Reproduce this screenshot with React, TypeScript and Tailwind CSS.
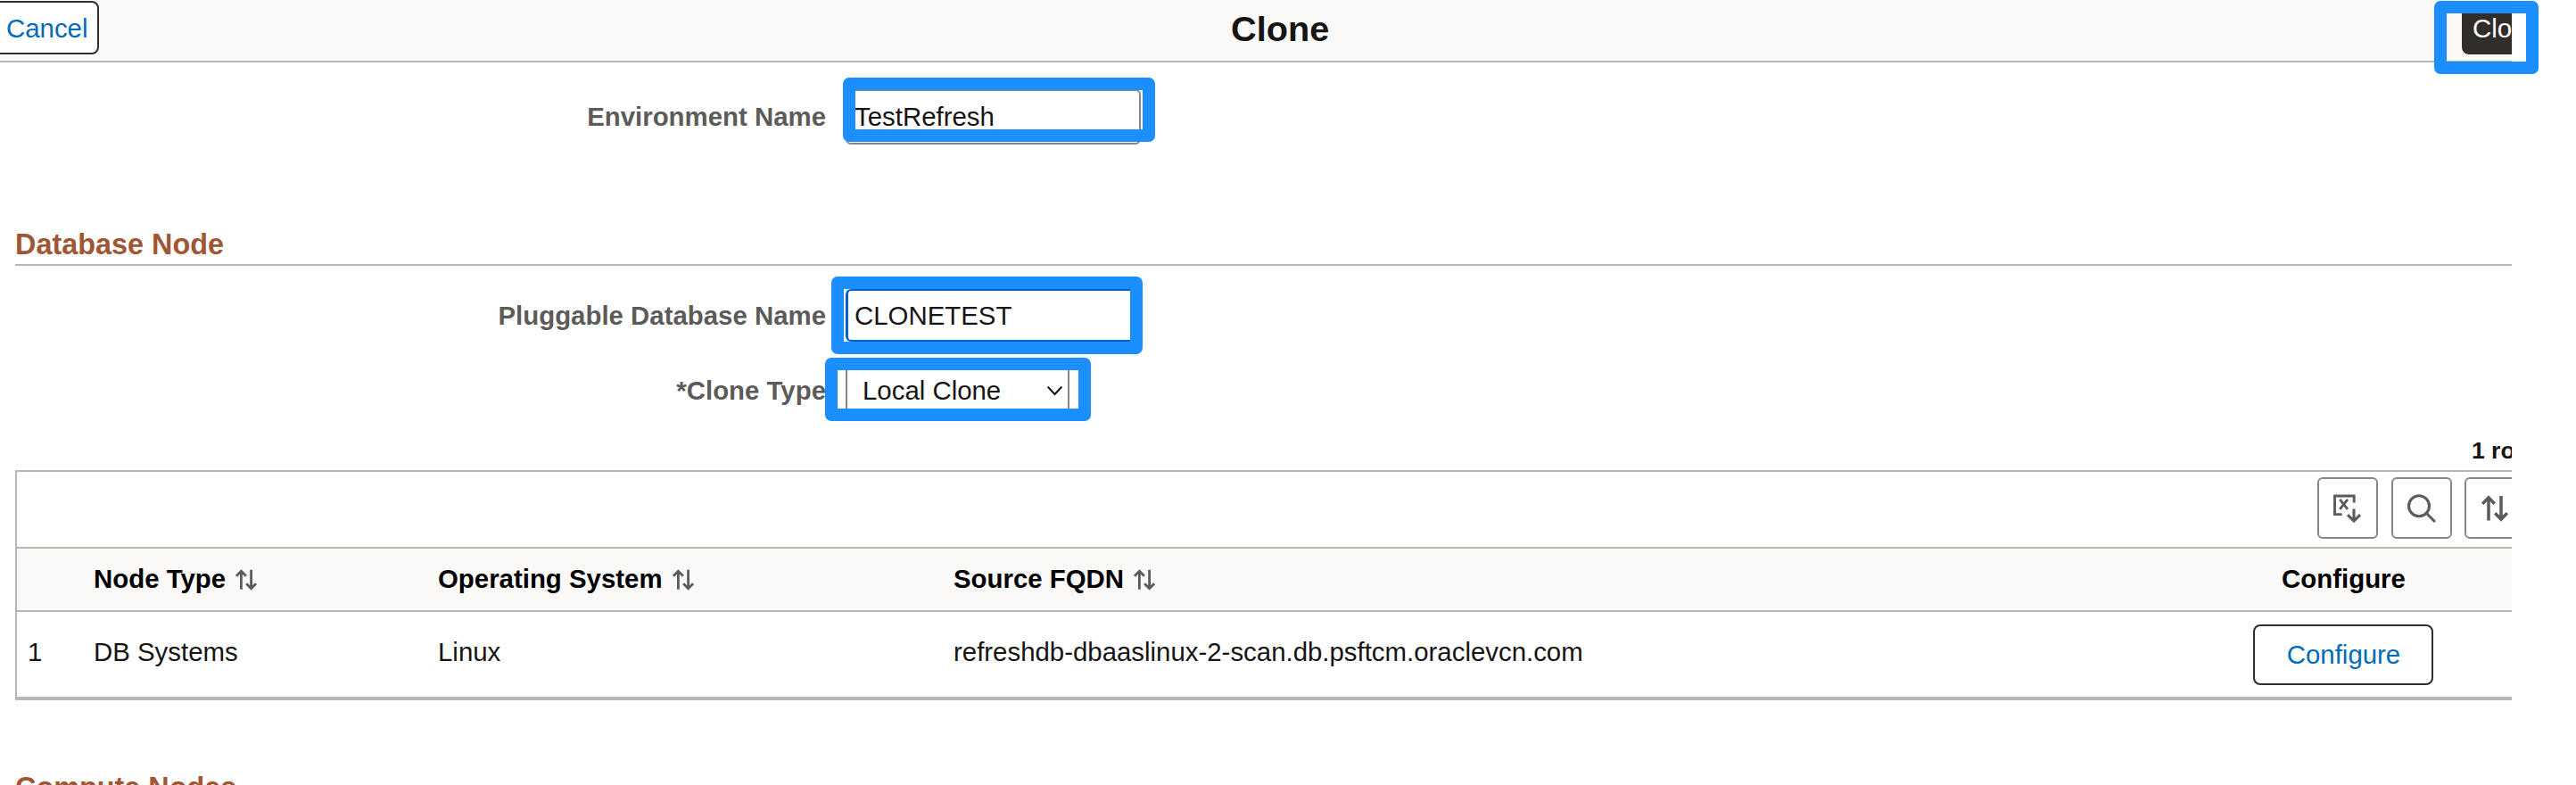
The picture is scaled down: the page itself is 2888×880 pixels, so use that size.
import React from "react";

function SortIcon({ className }: { className: string }) {
  return (
    <svg className={className} viewBox="0 0 30 30" fill="none" stroke="#5c5b59" strokeWidth="3.5">
      <path d="M8 28.5V2.8M1.2 9.8 8 2.8l6.8 7" />
      <path d="M22 1v26.2M15.2 20.2l6.8 7 6.8-7" />
    </svg>
  );
}

function ExportIcon() {
  return (
    <svg className="h-8 w-8" viewBox="0 0 32 32" fill="none" stroke="#5c5b59">
      <path strokeWidth="2.9" d="M23.2 9.5V2H1.5v20.6h8.2" />
      <path strokeWidth="2.8" d="M7.2 5.8l8.8 11M16 5.8l-8.8 11" />
      <path strokeWidth="3.1" d="M23 16.5v13.2M16 23.2l7 6.8 7-6.8" />
    </svg>
  );
}

function SearchIcon() {
  return (
    <svg className="h-8 w-8" viewBox="0 0 32 32" fill="none" stroke="#5c5b59" strokeWidth="3">
      <circle cx="13" cy="13.3" r="11.5" />
      <path d="M21.3 21.3 31 31" />
    </svg>
  );
}

function ToolButton({ children }: { children: React.ReactNode }) {
  return (
    <button className="flex h-[69px] w-[68px] shrink-0 items-center justify-center rounded-[6px] border-2 border-[#8b8580] bg-white last:-ml-px">
      {children}
    </button>
  );
}

function HeaderCell({ label }: { label: string }) {
  return (
    <div className="flex items-center gap-[11px] pb-[2px]">
      {label}
      <SortIcon className="mt-[3px] h-[24px] w-[24px]" />
    </div>
  );
}

function Highlight({ className }: { className: string }) {
  return <div className={"pointer-events-none absolute rounded-[7px] border-[14px] border-[#1b8fff] " + className} />;
}

export default function App() {
  return (
    <div className="relative h-[880px] w-[2888px] overflow-hidden bg-white font-['Liberation_Sans',Arial,sans-serif] text-[29.4px] leading-[34px] text-[#161513]">
      <div className="flex h-[880px] w-[2816px] flex-col overflow-hidden whitespace-nowrap">
        <header className="flex h-[70px] shrink-0 border-b-2 border-[#bab5b1] bg-[#faf9f8] pt-px">
          <div className="w-[1380px] shrink-0">
            <button className="ml-[-10px] flex h-[60px] w-[121px] items-center rounded-[8px] border-2 border-[#312d2a] bg-white pt-[2px] pl-[15px] text-[#006bb8]">
              Cancel
            </button>
          </div>
          <h1 className="pt-[8px] text-[39.7px] leading-[46px] font-bold">Clone</h1>
          <div className="ml-auto w-[56px] overflow-hidden">
            <button className="flex h-[60px] w-[100px] items-center rounded-[8px] bg-[#312d2a] pt-[2px] pl-[12px] text-white">
              Clone
            </button>
          </div>
        </header>

        <section className="mt-[30px] flex h-[62px] shrink-0 items-center">
          <label className="w-[948px] shrink-0 pr-[22px] text-right font-bold text-[#5c5b59]">Environment Name</label>
          <div className="flex h-[62px] w-[331px] items-center rounded-[6px] border-2 border-[#8b8580] pl-[8px]">
            TestRefresh
          </div>
        </section>

        <h2 className="mt-[93px] ml-[17px] h-[43px] shrink-0 border-b-2 border-[#bab5b1] pt-px text-[32.4px] leading-[37px] font-bold text-[#9f5733]">
          Database Node
        </h2>

        <section className="mt-[26px] flex h-[59px] shrink-0 items-center">
          <label className="w-[948px] shrink-0 pr-[22px] text-right font-bold text-[#5c5b59]">Pluggable Database Name</label>
          <div className="flex h-[59px] w-[331px] items-center rounded-[6px] border-2 border-l-[3px] border-[#0062cf] pl-[7px]">
            CLONETEST
          </div>
        </section>

        <section className="mt-[25px] flex h-[60px] shrink-0 items-center">
          <label className="w-[948px] shrink-0 pr-[22px] text-right font-bold text-[#5c5b59]">*Clone Type</label>
          <div className="flex h-[60px] w-[251px] items-center justify-between rounded-[6px] border-2 border-[#8b8580] pr-[5px] pl-[17px]">
            Local Clone
            <svg className="h-[12px] w-[19px]" viewBox="0 0 19 12" fill="none" stroke="#161513" strokeWidth="2">
              <path d="M1.6 1.5l7.9 8.5 7.9-8.5" />
            </svg>
          </div>
        </section>

        <div className="mt-[21px] ml-[2771px] h-[38px] shrink-0 text-[26.5px] leading-[32px] font-bold">1 row</div>

        <section className="ml-[17px] shrink-0 border-t-2 border-b-4 border-l-2 border-[#bab5b1]">
          <div className="flex h-[84px] gap-[15px] overflow-hidden pt-[6px] pl-[2579px]">
            <ToolButton>
              <ExportIcon />
            </ToolButton>
            <ToolButton>
              <SearchIcon />
            </ToolButton>
            <ToolButton>
              <SortIcon className="h-[30px] w-[30px]" />
            </ToolButton>
          </div>
          <div className="grid h-[73px] grid-cols-[86px_386px_578px_1369px_378px] items-center border-y-2 border-[#bab5b1] bg-[#faf9f8] font-bold text-black">
            <div />
            <HeaderCell label="Node Type" />
            <HeaderCell label="Operating System" />
            <HeaderCell label="Source FQDN" />
            <div className="pb-[2px] pl-px text-center">Configure</div>
          </div>
          <div className="grid h-[95px] grid-cols-[86px_386px_578px_1369px_378px] pt-[14px]">
            <div className="pt-[14px] pl-[12px]">1</div>
            <div className="pt-[14px]">DB Systems</div>
            <div className="pt-[14px]">Linux</div>
            <div className="pt-[14px]">refreshdb-dbaaslinux-2-scan.db.psftcm.oraclevcn.com</div>
            <button className="flex h-[68px] w-[202px] items-center justify-center justify-self-center rounded-[8px] border-2 border-[#312d2a] bg-white pl-px text-[#006bb8]">
              Configure
            </button>
          </div>
        </section>

        <h2 className="mt-[80px] ml-[17px] shrink-0 text-[32.4px] leading-[37px] font-bold text-[#9f5733]">Compute Nodes</h2>
      </div>

      <Highlight className="left-[2729px] top-[1px] h-[82px] w-[117px]" />
      <Highlight className="left-[945px] top-[87px] h-[72px] w-[350px]" />
      <Highlight className="left-[932px] top-[310px] h-[87px] w-[349px]" />
      <Highlight className="left-[925px] top-[401px] h-[71px] w-[298px]" />
    </div>
  );
}
